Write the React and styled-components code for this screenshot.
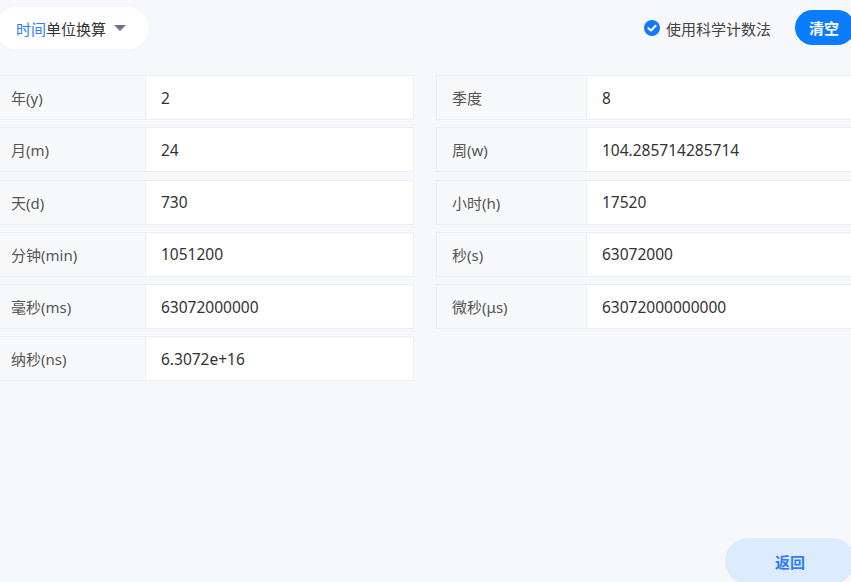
import React, { useState } from 'react';
import styled, { createGlobalStyle } from 'styled-components';

const GlobalStyle = createGlobalStyle`
  html, body {
    margin: 0;
    padding: 0;
    background: #f7f8fc;
    overflow: hidden;
  }
  body {
    font-family: "Noto Sans", "Noto Sans CJK SC", sans-serif;
  }
`;

const Page = styled.div`
  width: 860px;
  height: 582px;
  margin-left: -5px;
  display: flex;
  flex-direction: column;
`;

const Header = styled.div`
  display: flex;
  align-items: center;
  justify-content: space-between;
  padding-top: 7px;
  height: 42px;
`;

const Picker = styled.div`
  display: flex;
  align-items: center;
  height: 42px;
  padding: 0 23px 0 21px;
  background: #fff;
  border-radius: 21px;
  font-size: 15px;
  color: #333;
`;

const Accent = styled.span`
  color: #2f7df6;
`;

const Caret = styled.span`
  margin-left: 8px;
  width: 0;
  height: 0;
  border-left: 6px solid transparent;
  border-right: 6px solid transparent;
  border-top: 6px solid #6e7187;
`;

const Tools = styled.div`
  display: flex;
  align-items: center;
`;

const Check = styled.label`
  display: flex;
  align-items: center;
  gap: 6px;
  font-size: 15px;
  color: #444;
  margin-right: 24px;
  cursor: pointer;
`;

const ClearButton = styled.button`
  width: 60px;
  height: 35px;
  border: none;
  border-radius: 18px;
  background: #0a7cff;
  color: #fff;
  font-family: inherit;
  font-size: 15px;
  font-weight: 700;
  text-align: left;
  padding: 0 0 0 14px;
  margin-top: -1px;
`;

const Grid = styled.div`
  display: grid;
  grid-template-columns: 419px 419px;
  column-gap: 22px;
  row-gap: 7.25px;
  margin-top: 26px;
`;

const Row = styled.div`
  display: grid;
  grid-template-columns: 150px 1fr;
  height: 45px;
  border: 1px solid #eceef3;
  box-sizing: border-box;
`;

const Label = styled.div`
  display: flex;
  align-items: center;
  padding-left: 15px;
  background: #f8f9fb;
  border-right: 1px solid #eceef3;
  font-size: 15px;
  color: #555;
`;

const Value = styled.div`
  display: flex;
  align-items: center;
  padding-left: 15px;
  background: #fff;
  font-size: 15.5px;
  color: #333;
`;

const Footer = styled.div`
  margin-top: auto;
  display: flex;
  justify-content: flex-end;
`;

const BackButton = styled.button`
  width: 130px;
  height: 46px;
  margin-bottom: -2px;
  border: none;
  border-radius: 23px;
  background: #ddebfe;
  color: #2f7df6;
  font-family: inherit;
  font-size: 15px;
  font-weight: 700;
`;

const CheckIcon = () => (
  <svg width="16" height="16" viewBox="0 0 16 16">
    <circle cx="8" cy="8" r="8" fill="#1677ff" />
    <path d="M4.4 8.2 L7 10.6 L11.6 5.8" fill="none" stroke="#fff" strokeWidth="2" strokeLinecap="round" strokeLinejoin="round" />
  </svg>
);

const units = [
  ['年(y)', '2'],
  ['季度', '8'],
  ['月(m)', '24'],
  ['周(w)', '104.285714285714'],
  ['天(d)', '730'],
  ['小时(h)', '17520'],
  ['分钟(min)', '1051200'],
  ['秒(s)', '63072000'],
  ['毫秒(ms)', '63072000000'],
  ['微秒(μs)', '63072000000000'],
  ['纳秒(ns)', '6.3072e+16'],
];

export default function App() {
  const [sci, setSci] = useState(true);

  return (
    <Page>
      <GlobalStyle />
      <Header>
        <Picker>
          <Accent>时间</Accent>单位换算
          <Caret />
        </Picker>
        <Tools>
          <Check onClick={() => setSci(!sci)}>
            {sci ? <CheckIcon /> : <svg width="16" height="16"><circle cx="8" cy="8" r="7.5" fill="#fff" stroke="#ccc" /></svg>}
            使用科学计数法
          </Check>
          <ClearButton>清空</ClearButton>
        </Tools>
      </Header>

      <Grid>
        {units.map(([label, value]) => (
          <Row key={label}>
            <Label>{label}</Label>
            <Value>{value}</Value>
          </Row>
        ))}
      </Grid>

      <Footer>
        <BackButton>返回</BackButton>
      </Footer>
    </Page>
  );
}
